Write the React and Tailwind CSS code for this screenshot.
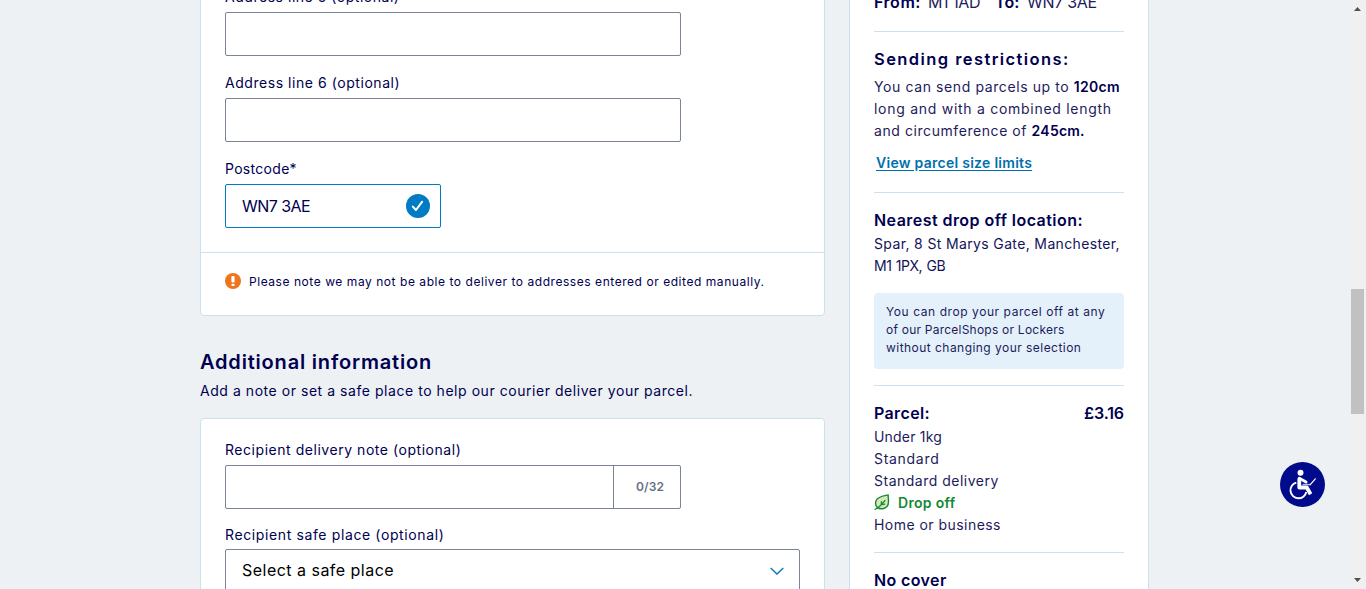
import React from "react";

function Label({ children, className = "" }) {
  return <label className={`block h-[21px] whitespace-nowrap text-sm leading-[21px] ${className}`}>{children}</label>;
}

function Rule() {
  return <hr className="h-px shrink-0 border-0 bg-[#c8e3ef]" />;
}

function CheckBadge() {
  return (
    <svg className="size-6" viewBox="0 0 24 24" fill="none">
      <circle cx="12" cy="12" r="12" fill="#007bc4" />
      <path d="M6.8 12.6l3.2 3.4 6.2-8.3" stroke="#fff" strokeWidth="2" strokeLinecap="round" strokeLinejoin="round" />
    </svg>
  );
}

function WarningBadge() {
  return (
    <svg className="size-4" viewBox="0 0 16 16">
      <circle cx="8" cy="8" r="8" fill="#ee741d" />
      <rect x="6.4" y="3" width="3.200" height="6.600" rx="1" fill="#fff" />
      <rect x="6.4" y="10.8" width="3.200" height="2.200" rx="1" fill="#fff" />
    </svg>
  );
}

function LeafIcon() {
  return (
    <svg className="relative -top-px size-4" viewBox="0 0 16 16" fill="none" stroke="#128a35" strokeLinecap="round" strokeLinejoin="round">
      <path d="M14.2.9C11 1.8 4.300 2.300 2.300 6.200C1 9 1.800 11.800 3.200 13.400C5.600 15.500 10.500 15.300 13 12.600C16 9.200 13.800 4.500 14.200.9Z" fill="#d8e8ba" strokeWidth="1.400" />
      <path d="M.9 15.300C3.700 15 7 11.300 11 6.500M7.300 7.500V10.700L10.800 10.200" strokeWidth="1.200" />
    </svg>
  );
}

function WheelchairIcon() {
  return (
    <svg className="size-[45px]" viewBox="0 0 45 45" fill="none">
      <circle cx="22.5" cy="22.500" r="22.500" fill="#000b8c" />
      <circle cx="20.500" cy="10.700" r="3" fill="#fff" />
      <path d="M16.300 20.600A8 8 0 1 0 26.300 30" stroke="#fff" strokeWidth="1.900" />
      <path d="M19.300 16.500V25.500H26.800L30.600 32.200" stroke="#fff" strokeWidth="3.800" strokeLinejoin="round" strokeLinecap="butt" />
      <path d="M19.300 16.300L26 20" stroke="#fff" strokeWidth="3" strokeLinecap="round" />
      <path d="M22.500 22.600H30.300" stroke="#b9bfe8" strokeWidth="1.500" />
      <path d="M30.300 22.600L35.300 16.800" stroke="#fff" strokeWidth="1.200" strokeLinecap="round" />
    </svg>
  );
}

function AddressCard() {
  return (
    <section className="rounded border border-[#c8e3ef] bg-white">
      <div className="px-6 pt-6 pb-6">
        <Label className="tracking-[0.53px]">Address line 5 (optional)</Label>
        <div className="mt-[5px] h-11 w-[456px] rounded-xs border border-[#7b8496]" />
        <Label className="mt-4 tracking-[0.55px]">Address line 6 (optional)</Label>
        <div className="mt-[5px] h-11 w-[456px] rounded-xs border border-[#7b8496]" />
        <Label className="mt-4 tracking-[0.3px]">Postcode*</Label>
        <div className="mt-[5px] flex h-11 w-[216px] items-center justify-between rounded-xs border border-[#007bc4] pr-2.5 pl-4">
          <span className="text-base tracking-[-0.55px]">WN7 3AE</span>
          <CheckBadge />
        </div>
      </div>
      <Rule />
      <div className="flex h-[62px] items-start gap-2 px-6 pt-5">
        <WarningBadge />
        <span className="whitespace-nowrap text-xs leading-[18px] tracking-[0.55px]">
          Please note we may not be able to deliver to addresses entered or edited manually.
        </span>
      </div>
    </section>
  );
}

function AdditionalInfo() {
  return (
    <>
      <h2 className="mt-8 text-xl leading-7 font-semibold tracking-[0.81px]">Additional information</h2>
      <p className="mt-1 whitespace-nowrap text-sm leading-[22px] tracking-[0.545px]">
        Add a note or set a safe place to help our courier deliver your parcel.
      </p>
      <section className="mt-4 rounded border border-[#c8e3ef] bg-white px-6 pt-5 pb-10">
        <Label className="tracking-[0.54px]">Recipient delivery note (optional)</Label>
        <div className="mt-[5px] flex h-11 w-[456px] rounded-xs border border-[#7b8496]">
          <div className="grow" />
          <div className="flex w-[67px] items-center justify-end border-l border-[#7b8496] pr-4 text-xs font-semibold tracking-[0.1px] text-[#667085]">
            0/32
          </div>
        </div>
        <Label className="mt-[15px] tracking-[0.62px]">Recipient safe place (optional)</Label>
        <div className="mt-1 flex h-11 items-center justify-between rounded-xs border border-[#7b8496] pr-[15px] pl-4 text-black">
          <span className="pb-0.5 text-base tracking-[0.48px]">Select a safe place</span>
          <svg className="h-2 w-[14px]" viewBox="0 0 14 8" fill="none">
            <path d="M.7 1L7 7L13.300 1" stroke="#007bc4" strokeWidth="1.400" />
          </svg>
        </div>
      </section>
    </>
  );
}

function Summary() {
  return (
    <aside className="-mt-10 flex h-[680px] w-[300px] shrink-0 flex-col border border-[#c8e3ef] bg-white px-6 pt-[29px] whitespace-nowrap">
      <div className="flex h-6 text-base leading-6">
        <strong className="w-[54px] font-semibold tracking-[0.54px]">From:</strong>
        <span className="w-[67px] tracking-[-0.4px] text-[#1d1b5c]">M1 1AD</span>
        <strong className="w-8 font-semibold tracking-[0.1px]">To:</strong>
        <span className="tracking-[-0.3px] text-[#1d1b5c]">WN7 3AE</span>
      </div>
      <div className="h-[17px]" />
      <Rule />
      <h3 className="mt-[15px] text-[16.5px] leading-6 font-semibold tracking-[1.42px]">Sending restrictions:</h3>
      <div className="mt-[5px] text-sm leading-[22px] text-[#1d1b5c]">
        <p><span className="tracking-[0.6px]">You can send parcels up to </span><strong className="font-semibold tracking-[0.27px] text-[#000050]">120cm</strong></p>
        <p className="tracking-[0.72px]">long and with a combined length</p>
        <p><span className="tracking-[0.57px]">and circumference of </span><strong className="font-semibold tracking-[0.22px] text-[#000050]">245cm.</strong></p>
      </div>
      <a className="mt-2.5 ml-0.5 text-sm leading-[22px] font-semibold tracking-[0.27px] text-[#0070ad] underline underline-offset-2">View parcel size limits</a>
      <div className="h-[18px]" />
      <Rule />
      <h3 className="mt-[15px] text-base leading-6 font-semibold tracking-[0.45px]">Nearest drop off location:</h3>
      <div className="mt-px text-sm leading-[22px] text-[#14125a]">
        <p className="tracking-[0.36px]">Spar, 8 St Marys Gate, Manchester,</p>
        <p className="tracking-[-0.5px] [word-spacing:1px]">M1 1PX, GB</p>
      </div>
      <div className="mt-4 mb-4 h-[76px] rounded bg-[#e4f1fa] px-3 py-2.5 text-xs leading-[18px] text-[#1d1b5c]">
        <p className="tracking-[0.57px]">You can drop your parcel off at any</p>
        <p className="tracking-[0.23px]">of our ParcelShops or Lockers</p>
        <p className="tracking-[0.46px]">without changing your selection</p>
      </div>
      <Rule />
      <h3 className="mt-[15px] flex justify-between text-base leading-6 font-semibold">
        <span className="tracking-[0.37px]">Parcel:</span>
        <span className="tracking-[-0.12px]">£3.16</span>
      </h3>
      <div className="mt-px text-sm leading-[22px] text-[#1d1b5c]">
        <p className="tracking-[0.2px]">Under 1kg</p>
        <p className="tracking-[0.7px]">Standard</p>
        <p className="tracking-[0.5px]">Standard delivery</p>
        <p className="flex items-center gap-2 font-semibold tracking-[0.3px] text-[#128a35]"><LeafIcon />Drop off</p>
        <p className="tracking-[0.46px]">Home or business</p>
      </div>
      <div className="h-4" />
      <Rule />
      <h3 className="mt-[15px] text-base leading-6 font-semibold tracking-[0.38px]">No cover</h3>
    </aside>
  );
}

function Scrollbar() {
  return (
    <div className="flex h-full w-4 shrink-0 flex-col items-center bg-[#f0f0f0]">
      <svg className="h-[17px] w-4" viewBox="0 0 16 17"><path d="M4 11L7.500 7L11 11Z" fill="#505050" /></svg>
      <div className="mt-[272px] mr-px h-[125px] w-[13px] bg-[#c1c1c1]" />
      <svg className="mt-auto h-[17px] w-4" viewBox="0 0 16 17"><path d="M4 6L7.500 10L11 6Z" fill="#505050" /></svg>
    </div>
  );
}

export default function App() {
  return (
    <div className="flex h-[589px] w-[1366px] overflow-hidden bg-[#edf1f4] font-['Inter',sans-serif] text-[#000050]">
      <div className="flex min-w-0 grow items-start gap-6 pl-[200px]">
        <main className="-mt-[39px] w-[625px] shrink-0">
          <AddressCard />
          <AdditionalInfo />
        </main>
        <Summary />
      </div>
      <button className="fixed top-[462px] left-[1280px] size-[45px]" aria-label="Accessibility"><WheelchairIcon /></button>
      <Scrollbar />
    </div>
  );
}
